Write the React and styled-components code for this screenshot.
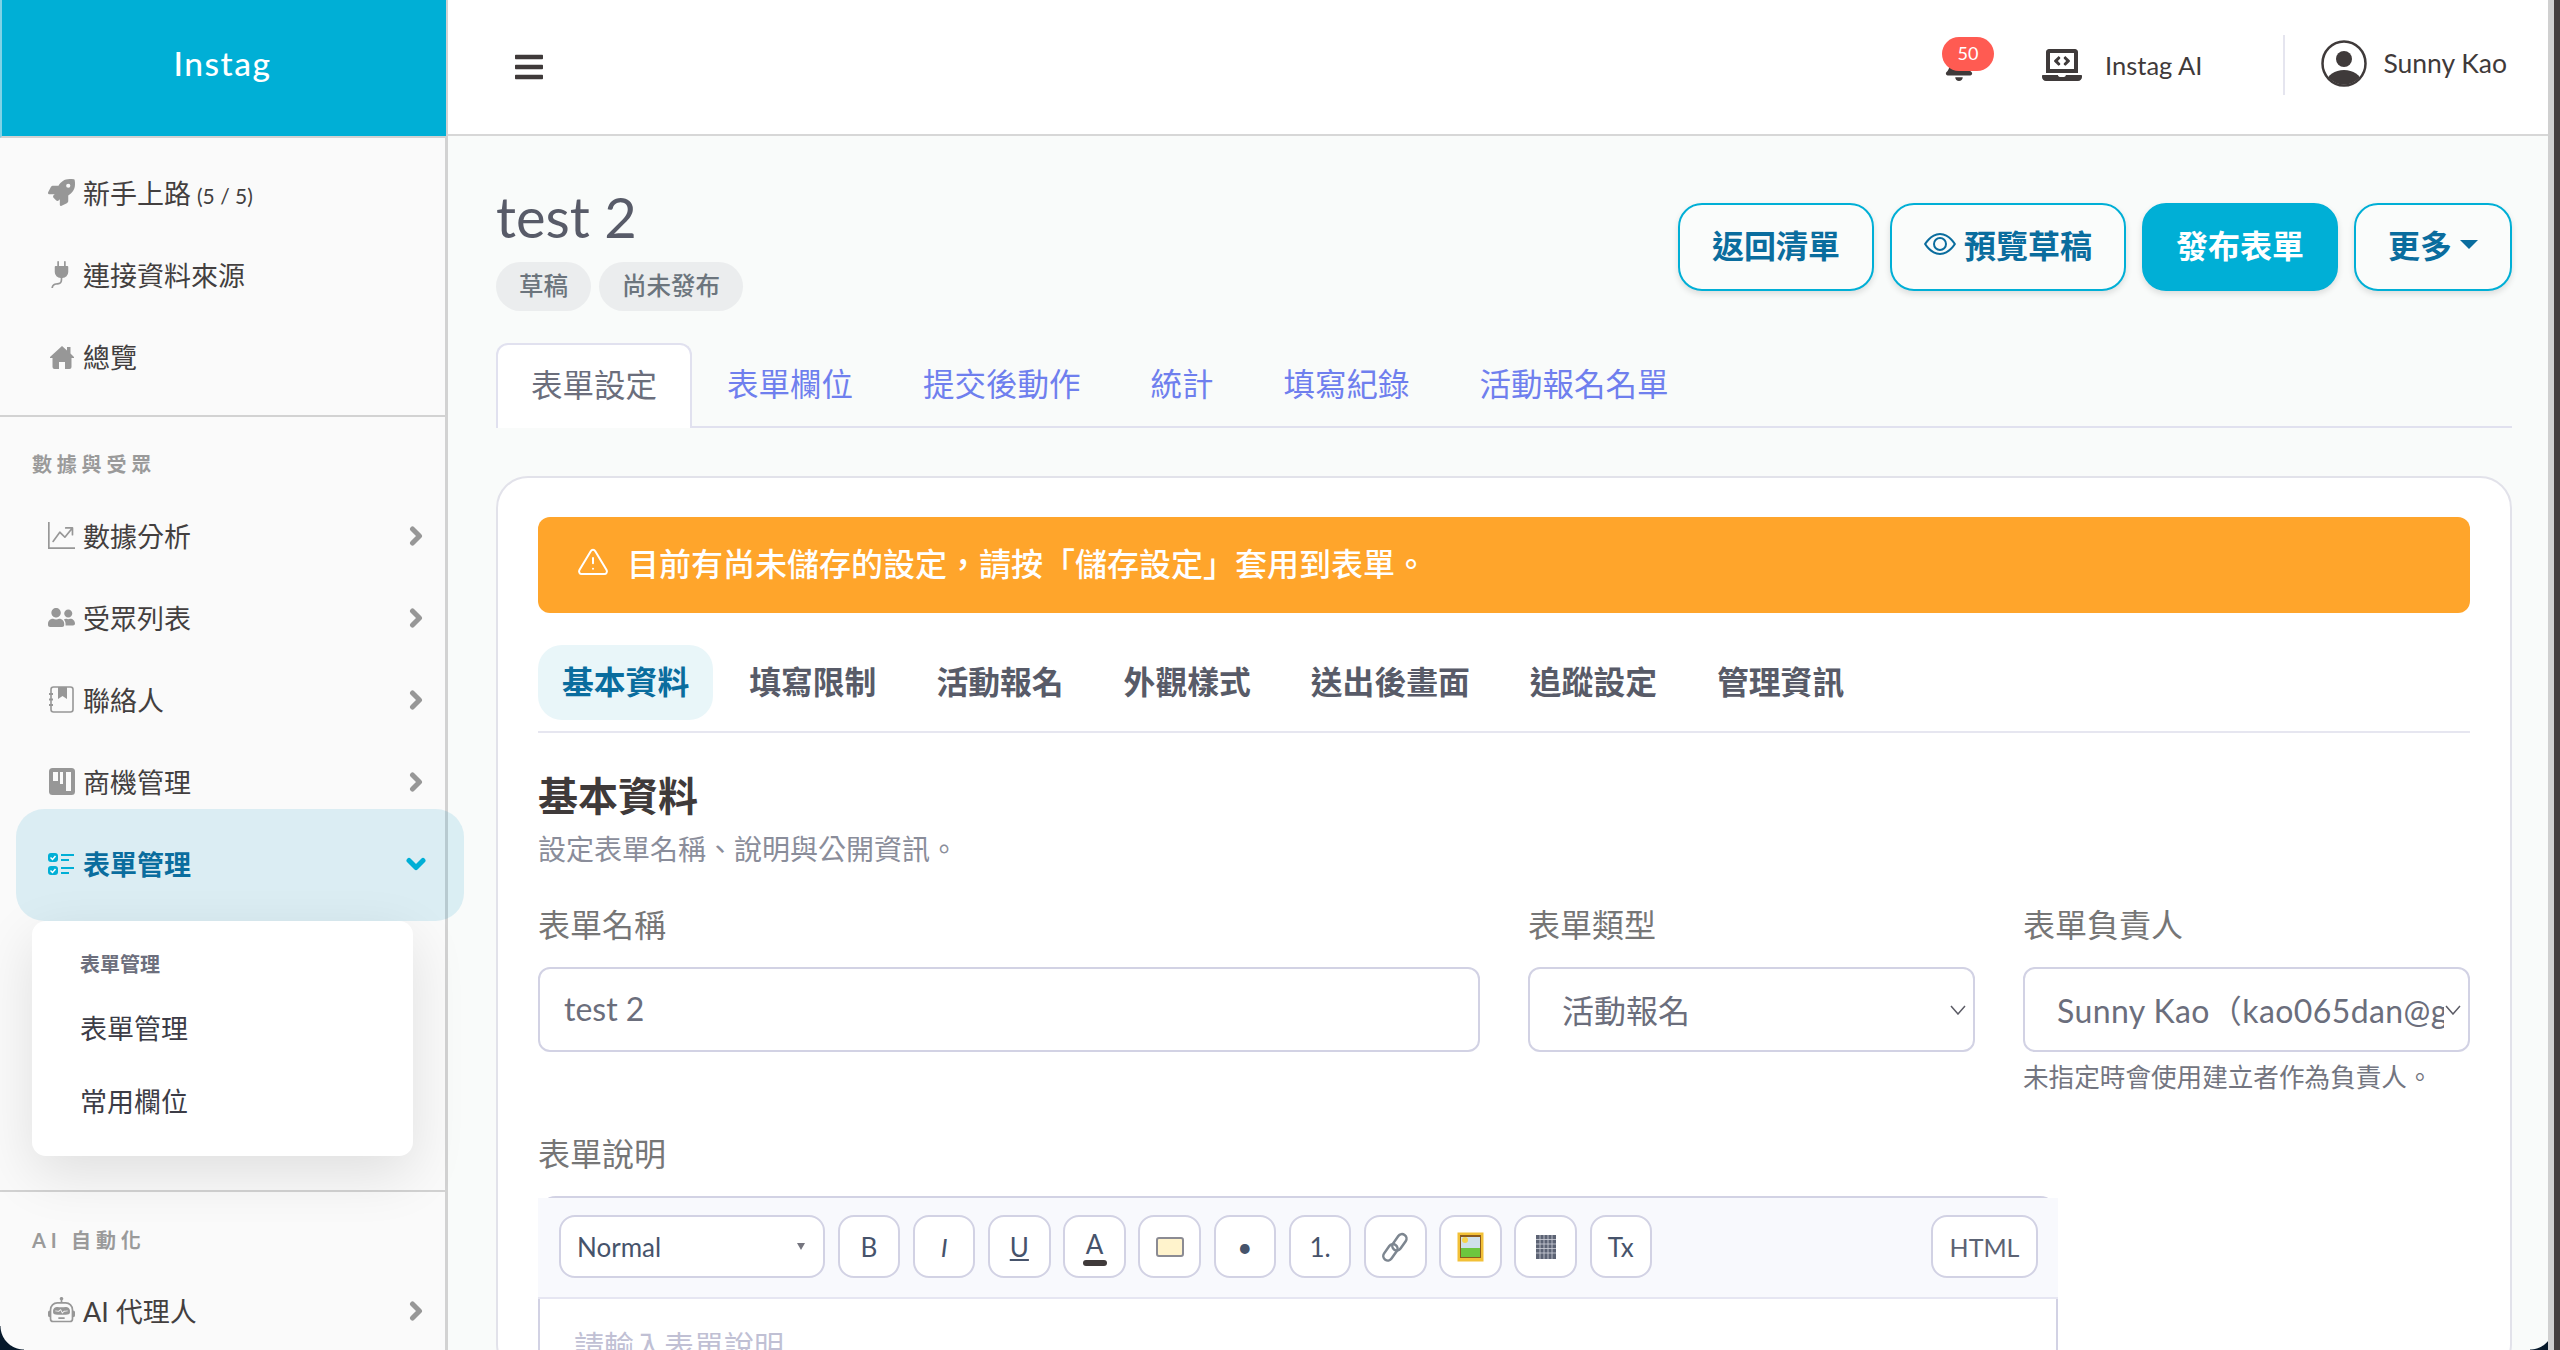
import React from "react";
import styled, { createGlobalStyle } from "styled-components";
import { FaRocket, FaUserFriends, FaBell, FaBars, FaLaptopCode } from "react-icons/fa";
import { BsPlugFill, BsGraphUpArrow, BsRobot, BsEye } from "react-icons/bs";
import { FiAlertTriangle } from "react-icons/fi";

const sans = `Lato, "Noto Sans CJK TC", "Noto Sans", sans-serif`;

const GlobalStyle = createGlobalStyle`
  html, body { margin: 0; padding: 0; height: 100%; overflow: hidden; }
  body { font-family: ${sans}; background: #443f3f; }
  * { box-sizing: border-box; }
`;

const Page = styled.div`
  display: flex;
  width: 2554px;
  height: 1350px;
  overflow: hidden;
  position: relative;
  border-right: 6px solid #d0d0d0;
`;

const Sidebar = styled.aside`
  flex: 0 0 448px;
  background: #fafafa;
  border-right: 3px solid #d2d2d2;
  display: flex;
  flex-direction: column;
  position: relative;
  z-index: 2;
  & > * {
    flex: none;
  }
`;

const Brand = styled.div`
  height: 138px;
  margin-right: -1px;
  background: #00afd6;
  border-bottom: 2px solid #d2d2d2;
  border-left: 2px solid #7fd2e6;
  color: #fff;
  font-size: 33.5px;
  font-weight: 500;
  letter-spacing: 1.5px;
  display: flex;
  align-items: center;
  justify-content: center;
  padding: 0 3px 10px 0;
`;

const NavGroup = styled.div`
  padding-top: 15px;
  height: ${(p) => p.$height}px;
  border-bottom: ${(p) => (p.$divider ? "2px solid #d2d2d2" : "0")};
`;

const Item = styled.div`
  height: ${(p) => (p.$active ? 112 : 82)}px;
  display: flex;
  align-items: center;
  gap: 8px;
  padding: 0 22px 3px 48px;
  color: ${(p) => (p.$active ? "#0a6d9e" : "#433f3f")};
  font-size: 27px;
  font-weight: ${(p) => (p.$active ? 700 : 400)};
  ${(p) =>
    p.$active &&
    `
    margin: -15px -19px 0 16px;
    padding: 0 38px 3px 32px;
    border-radius: 28px;
    background: rgba(0, 150, 200, 0.12);
    position: relative;
  `}
`;

const IconSlot = styled.span`
  width: 27px;
  height: 27px;
  flex: none;
  display: flex;
  align-items: center;
  justify-content: center;
  color: ${(p) => (p.$active ? "#00afd6" : "#979797")};
  font-size: 27px;
`;

const ItemLabel = styled.span`
  flex: 1;
  white-space: nowrap;
`;

const Count = styled.small`
  font-size: 21px;
  font-weight: 400;
  margin-left: 6px;
`;

const ChevronSvg = styled.svg`
  display: block;
  flex: none;
`;

const SectionTitle = styled.div`
  color: #9a9a9a;
  font-size: 20px;
  font-weight: 700;
  letter-spacing: 4.8px;
  padding: 0 0 2px 32px;
  height: 57px;
  display: flex;
  align-items: center;
  margin-top: ${(p) => p.$top || 0}px;
  margin-bottom: ${(p) => p.$bottom || 0}px;
`;

const SubMenu = styled.div`
  margin: 0 32px;
  height: 235px;
  background: #fff;
  border-radius: 14px;
  box-shadow: 0 18px 56px rgba(0, 0, 0, 0.11);
  padding-top: 26px;
  position: relative;
`;

const SubTitle = styled.div`
  color: #6d6f7d;
  font-size: 20px;
  font-weight: 700;
  padding-left: 48px;
  height: 32px;
  margin-bottom: 12px;
  display: flex;
  align-items: center;
`;

const SubLink = styled.div`
  color: #3c3c46;
  font-size: 27px;
  padding-left: 48px;
  height: 73px;
  display: flex;
  align-items: center;
`;

const Corner = styled.div`
  position: absolute;
  bottom: 0;
  width: 24px;
  height: 24px;
  z-index: 5;
  ${(p) =>
    p.$right
      ? `right: -6px; background: radial-gradient(circle at 0 0, transparent 23px, #07192b 24px);`
      : `left: 0; background: radial-gradient(circle at 100% 0, transparent 23px, #07192b 24px);`}
`;

const Main = styled.main`
  flex: 0 0 2100px;
  background: linear-gradient(#f1f2f2, #f9fbfa 60px);
  display: flex;
  flex-direction: column;
`;

const Header = styled.header`
  height: 136px;
  flex: none;
  background: #fff;
  border-bottom: 2px solid #d7d7d7;
  display: flex;
  align-items: center;
  padding-left: 65px;
  color: #3f3a3a;
`;

const Burger = styled.span`
  display: flex;
  font-size: 32px;
  color: #3f3a3a;
  flex: 1;
`;

const BellBox = styled.div`
  position: relative;
  width: 52px;
  height: 44px;
  margin-bottom: 16px;
  color: #3f3a3a;
  font-size: 30px;
  display: flex;
  align-items: flex-end;
  padding-left: 2px;
`;

const Badge = styled.span`
  position: absolute;
  left: 0;
  top: 0;
  width: 52px;
  height: 34px;
  border-radius: 17px;
  background: #ff5b52;
  color: #fff;
  font-size: 18px;
  display: flex;
  align-items: center;
  justify-content: center;
  padding-bottom: 3px;
`;

const TopLink = styled.div`
  display: flex;
  align-items: center;
  gap: 23px;
  font-size: 25.5px;
  margin-left: 48px;
  color: #3f3a3a;
  margin-bottom: 4px;
`;

const LaptopIcon = styled.span`
  display: flex;
  font-size: 40px;
`;

const Rule = styled.span`
  width: 2px;
  height: 60px;
  background: #e5e5ef;
  margin: 0 36px 4px 81px;
`;

const UserBox = styled.div`
  display: flex;
  align-items: center;
  gap: 16px;
  font-size: 26.5px;
  margin-bottom: 8px;
  margin-right: 41px;
  white-space: nowrap;
`;

const Content = styled.div`
  padding: 67px 36px 0 48px;
  flex: 1;
`;

const TitleRow = styled.div`
  display: flex;
  justify-content: space-between;
  height: 140px;
`;

const Title = styled.h1`
  margin: -15px 0 0;
  font-size: 56px;
  font-weight: 400;
  line-height: 58px;
  color: #585b68;
`;

const Tags = styled.div`
  display: flex;
  gap: 8px;
  margin-top: 16px;
`;

const Tag = styled.span`
  height: 49px;
  padding: 0 23px 4px;
  border-radius: 25px;
  background: #ebedee;
  color: #6c757d;
  font-size: 24.5px;
  font-weight: 500;
  display: flex;
  align-items: center;
`;

const Actions = styled.div`
  display: flex;
  gap: 16px;
`;

const ActionButton = styled.button`
  height: 88px;
  padding: 0 32px 6px;
  border-radius: 24px;
  border: 2px solid #00afd6;
  background: ${(p) => (p.$primary ? "#00afd6" : "#fafcfb")};
  color: ${(p) => (p.$primary ? "#fff" : "#0a6d9e")};
  font-family: inherit;
  font-size: 32px;
  font-weight: 700;
  display: flex;
  align-items: center;
  gap: 8px;
  box-shadow: 0 3px 6px rgba(0, 0, 0, 0.12);
`;

const Caret = styled.span`
  width: 0;
  height: 0;
  border-left: 9px solid transparent;
  border-right: 9px solid transparent;
  border-top: 9px solid #0a6d9e;
`;

const Tabs = styled.div`
  display: flex;
  height: 85px;
  border-bottom: 2px solid #e1e1ef;
`;

const Tab = styled.div`
  height: 85px;
  padding: 0 35px 7px;
  font-size: 31.5px;
  display: flex;
  align-items: center;
  color: ${(p) => (p.$active ? "#6b6e7c" : "#6f7fee")};
  border-radius: 12px 12px 0 0;
  ${(p) =>
    p.$active &&
    `
    padding: 0 33px 7px;
    background: #fff;
    border: 2px solid #e1e1ef;
    border-bottom: 0;
  `}
`;

const Card = styled.section`
  margin-top: 48px;
  background: #fff;
  border: 2px solid #e2e2ea;
  border-radius: 32px;
  padding: 39px 40px 0;
  height: 900px;
`;

const Alert = styled.div`
  height: 96px;
  background: #ffa52b;
  border-radius: 12px;
  color: #fff;
  font-size: 32px;
  font-weight: 500;
  display: flex;
  align-items: center;
  gap: 18px;
  padding: 0 0 6px 39px;
`;

const SubTabs = styled.div`
  display: flex;
  gap: 12px;
  margin-top: 32px;
  padding-bottom: 11px;
  border-bottom: 2px solid #e6e6f0;
`;

const SubTab = styled.div`
  height: 75px;
  padding: 0 24px 5px;
  border-radius: 24px;
  font-size: 31.8px;
  font-weight: 700;
  display: flex;
  align-items: center;
  color: ${(p) => (p.$active ? "#0a6d9e" : "#585b68")};
  background: ${(p) => (p.$active ? "#e9f6f9" : "transparent")};
`;

const Heading = styled.h2`
  margin: 39px 0 0;
  font-size: 40px;
  line-height: 48px;
  font-weight: 700;
  color: #3f3a3a;
`;

const Sub = styled.p`
  margin: 11px 0 0;
  font-size: 28px;
  line-height: 36px;
  color: #8a8d9a;
`;

const FieldGrid = styled.div`
  display: grid;
  grid-template-columns: 942px 447px 447px;
  column-gap: 48px;
  margin-top: 34px;
`;

const Field = styled.div`
  display: flex;
  flex-direction: column;
`;

const Label = styled.label`
  font-size: 32px;
  line-height: 48px;
  color: #767676;
  margin-bottom: 18px;
`;

const DescLabel = styled(Label)`
  display: block;
  margin-top: 35px;
`;

const Input = styled.div`
  height: 85px;
  border: 2px solid #d2d2e4;
  border-radius: 12px;
  background: #fff;
  color: #6b6e7c;
  font-size: 32px;
  display: flex;
  align-items: center;
  padding-left: ${(p) => p.$pad || 24}px;
  padding-right: ${(p) => (p.$select ? 24 : 0)}px;
  padding-bottom: 2px;
  position: relative;
  overflow: hidden;
  white-space: nowrap;
`;

const SelectArrow = styled.svg`
  position: absolute;
  right: 7px;
  top: 36px;
  width: 16px;
  height: 10px;
`;

const ClipText = styled.span`
  overflow: hidden;
  letter-spacing: 0.4px;
`;

const Hint = styled.small`
  font-size: 25.6px;
  line-height: 36px;
  color: #737580;
  margin-top: 7px;
`;

const Editor = styled.div`
  width: 1520px;
  border: 2px solid #d2d2e4;
  border-radius: 18px;
`;

const Toolbar = styled.div`
  height: 101px;
  margin: 0 -2px;
  padding: 17px 20px 0 21px;
  background: #f8f9fd;
  border-bottom: 2px solid #e6e6f2;
  display: flex;
  gap: 12.7px;
`;

const FormatSelect = styled.div`
  width: 266px;
  height: 63px;
  border: 2px solid #d2d2e4;
  border-radius: 16px;
  background: #fff;
  color: #46536b;
  font-size: 26px;
  display: flex;
  align-items: center;
  justify-content: space-between;
  padding: 0 18px 0 16px;
`;

const TinyCaret = styled.span`
  width: 0;
  height: 0;
  border-left: 4px solid transparent;
  border-right: 4px solid transparent;
  border-top: 7px solid #75757f;
`;

const ToolButton = styled.div`
  width: 62.5px;
  height: 63px;
  flex: none;
  border: 2px solid #d2d2e4;
  border-radius: 16px;
  background: #fff;
  color: #46536b;
  font-size: 26px;
  display: flex;
  flex-direction: column;
  align-items: center;
  justify-content: center;
  position: relative;
  font-style: ${(p) => (p.$italic ? "italic" : "normal")};
  text-decoration: ${(p) => (p.$underline ? "underline" : "none")};
`;

const ColorBar = styled.span`
  width: 24px;
  height: 6px;
  border-radius: 3px;
  background: #3f3a3a;
`;

const Swatch = styled.span`
  width: 28px;
  height: 20px;
  border-radius: 3px;
  background: #fff3cc;
  border: 2px solid #8b8b93;
`;

const HtmlButton = styled(ToolButton)`
  width: 107px;
  margin-left: auto;
  font-size: 25px;
  color: #5c6374;
`;

const Placeholder = styled.div`
  padding: 24px 34px;
  color: #c0c0d4;
  font-size: 30px;
  line-height: 44px;
`;

function ChevronRight() {
  return (
    <ChevronSvg width="14" height="20" viewBox="0 0 14 20" fill="none" stroke="#979797" strokeWidth="5" strokeLinecap="round" strokeLinejoin="round">
      <path d="M3.5 3l7 7-7 7" />
    </ChevronSvg>
  );
}

function ChevronDown() {
  return (
    <ChevronSvg width="20" height="14" viewBox="0 0 20 14" fill="none" stroke="#00afd6" strokeWidth="5" strokeLinecap="round" strokeLinejoin="round">
      <path d="M3 3.5l7 7 7-7" />
    </ChevronSvg>
  );
}

function HomeIcon() {
  return (
    <svg width="24" height="24" viewBox="0 0 24 24" fill="#979797">
      <path d="M12 1l5 4.4V2h3.5v6.5L24 12v1h-2.5v9a2 2 0 0 1-2 2H15v-7H9v7H4.5a2 2 0 0 1-2-2v-9H0v-1z" />
    </svg>
  );
}

function ContactsIcon() {
  return (
    <svg width="27" height="27" viewBox="0 0 27 27" fill="none">
      <rect x="3" y="1" width="22" height="25" rx="2.5" stroke="#979797" strokeWidth="1.6" />
      <path d="M10 1h9v12l-4.5-3-4.5 3z" fill="#979797" />
      <path d="M1 8h4M1 13.5h4M1 19h4" stroke="#979797" strokeWidth="1.8" />
    </svg>
  );
}

function BoardIcon() {
  return (
    <svg width="26" height="27" viewBox="0 0 26 27">
      <rect width="26" height="27" rx="3.5" fill="#979797" />
      <rect x="4" y="4" width="5" height="9" fill="#fafafa" />
      <rect x="11" y="4" width="3" height="12" fill="#fafafa" />
      <rect x="17" y="4" width="5" height="19" fill="#fafafa" />
    </svg>
  );
}

function FormIcon() {
  return (
    <svg width="27" height="24" viewBox="0 0 27 24" fill="none">
      <rect y="1" width="10" height="9" rx="3" fill="#00afd6" />
      <rect y="14" width="10" height="9" rx="3" fill="#00afd6" />
      <path d="M2.5 5.5l2 2 3-3.5M2.5 18.5l2 2 3-3.5" stroke="#fff" strokeWidth="1.5" />
      <path d="M13 3h13M13 8h8M13 16h13M13 21h8" stroke="#00afd6" strokeWidth="2" />
    </svg>
  );
}

function AvatarIcon() {
  return (
    <svg width="46" height="47" viewBox="0 0 46 47" fill="none">
      <defs>
        <clipPath id="avatar-clip">
          <circle cx="23" cy="23.5" r="21" />
        </clipPath>
      </defs>
      <ellipse cx="23" cy="23.5" rx="21.5" ry="22" stroke="#3f3a3a" strokeWidth="2.5" />
      <circle cx="23" cy="19" r="8" fill="#3f3a3a" />
      <ellipse cx="23" cy="42" rx="17" ry="12" fill="#3f3a3a" clipPath="url(#avatar-clip)" />
    </svg>
  );
}

function ImageIcon() {
  return (
    <svg width="27" height="30" viewBox="0 0 27 30">
      <rect x="0.5" y="0.5" width="26" height="29" fill="#f2c037" />
      <rect x="3" y="3" width="21" height="23" fill="#8a5a1c" />
      <rect x="4" y="5" width="19" height="12" fill="#cfe0ea" />
      <circle cx="8" cy="8" r="3" fill="#f6d24a" />
      <rect x="4" y="16" width="19" height="9" fill="#6cc63e" />
    </svg>
  );
}

function LinkIcon() {
  return (
    <svg width="28" height="30" viewBox="0 0 28 30" fill="none" stroke="#7d8690" strokeWidth="2.5">
      <rect x="14" y="1" width="9" height="18" rx="4.5" transform="rotate(35 18 10)" />
      <rect x="5" y="11" width="9" height="18" rx="4.5" transform="rotate(35 9 20)" />
    </svg>
  );
}

function TableIcon() {
  return (
    <svg width="20" height="24" viewBox="0 0 20 24">
      <rect width="20" height="24" fill="#5c6374" />
      <path d="M0 4.5H20M0 9H20M0 13.5H20M0 18H20M4 0V24M8 0V24M12 0V24M16 0V24" stroke="#cfd2da" strokeWidth="0.8" />
    </svg>
  );
}

function Row({ icon, children, chevron, active }) {
  return (
    <Item $active={active}>
      <IconSlot $active={active}>{icon}</IconSlot>
      <ItemLabel>{children}</ItemLabel>
      {chevron && (active ? <ChevronDown /> : <ChevronRight />)}
    </Item>
  );
}

function Arrow() {
  return (
    <SelectArrow viewBox="0 0 16 10">
      <path d="M1 1l7 8 7-8" fill="none" stroke="#5c5c66" strokeWidth="1.5" />
    </SelectArrow>
  );
}

export default function App() {
  return (
    <>
      <GlobalStyle />
      <Page>
        <Sidebar>
          <Brand>Instag</Brand>
          <NavGroup $height={279} $divider>
            <Item>
              <IconSlot><FaRocket /></IconSlot>
              <ItemLabel>新手上路<Count>(5 / 5)</Count></ItemLabel>
            </Item>
            <Row icon={<BsPlugFill />}>連接資料來源</Row>
            <Row icon={<HomeIcon />}>總覽</Row>
          </NavGroup>
          <SectionTitle $top={19} $bottom={3}>數據與受眾</SectionTitle>
          <Row icon={<BsGraphUpArrow />} chevron>數據分析</Row>
          <Row icon={<FaUserFriends />} chevron>受眾列表</Row>
          <Row icon={<ContactsIcon />} chevron>聯絡人</Row>
          <Row icon={<BoardIcon />} chevron>商機管理</Row>
          <Row icon={<FormIcon />} chevron active>表單管理</Row>
          <SubMenu>
            <SubTitle>表單管理</SubTitle>
            <SubLink>表單管理</SubLink>
            <SubLink>常用欄位</SubLink>
          </SubMenu>
          <NavGroup $height={36} $divider />
          <SectionTitle $top={20} $bottom={2}>AI 自動化</SectionTitle>
          <Row icon={<BsRobot />} chevron>AI 代理人</Row>
          <Corner />
        </Sidebar>
        <Main>
          <Header>
            <Burger><FaBars /></Burger>
            <BellBox>
              <FaBell />
              <Badge>50</Badge>
            </BellBox>
            <TopLink>
              <LaptopIcon><FaLaptopCode /></LaptopIcon>
              Instag AI
            </TopLink>
            <Rule />
            <UserBox>
              <AvatarIcon />
              Sunny Kao
            </UserBox>
          </Header>
          <Content>
            <TitleRow>
              <div>
                <Title>test 2</Title>
                <Tags>
                  <Tag>草稿</Tag>
                  <Tag>尚未發布</Tag>
                </Tags>
              </div>
              <Actions>
                <ActionButton>返回清單</ActionButton>
                <ActionButton><BsEye />預覽草稿</ActionButton>
                <ActionButton $primary>發布表單</ActionButton>
                <ActionButton>更多<Caret /></ActionButton>
              </Actions>
            </TitleRow>
            <Tabs>
              <Tab $active>表單設定</Tab>
              <Tab>表單欄位</Tab>
              <Tab>提交後動作</Tab>
              <Tab>統計</Tab>
              <Tab>填寫紀錄</Tab>
              <Tab>活動報名名單</Tab>
            </Tabs>
            <Card>
              <Alert><FiAlertTriangle size={32} strokeWidth={1.5} />目前有尚未儲存的設定，請按「儲存設定」套用到表單。</Alert>
              <SubTabs>
                <SubTab $active>基本資料</SubTab>
                <SubTab>填寫限制</SubTab>
                <SubTab>活動報名</SubTab>
                <SubTab>外觀樣式</SubTab>
                <SubTab>送出後畫面</SubTab>
                <SubTab>追蹤設定</SubTab>
                <SubTab>管理資訊</SubTab>
              </SubTabs>
              <Heading>基本資料</Heading>
              <Sub>設定表單名稱、說明與公開資訊。</Sub>
              <FieldGrid>
                <Field>
                  <Label>表單名稱</Label>
                  <Input>test 2</Input>
                </Field>
                <Field>
                  <Label>表單類型</Label>
                  <Input $pad={32} $select>
                    活動報名
                    <Arrow />
                  </Input>
                </Field>
                <Field>
                  <Label>表單負責人</Label>
                  <Input $pad={32} $select>
                    <ClipText>Sunny Kao（kao065dan@gmail.com）</ClipText>
                    <Arrow />
                  </Input>
                  <Hint>未指定時會使用建立者作為負責人。</Hint>
                </Field>
              </FieldGrid>
              <DescLabel as="div">表單說明</DescLabel>
              <Editor>
                <Toolbar>
                  <FormatSelect>Normal<TinyCaret /></FormatSelect>
                  <ToolButton>B</ToolButton>
                  <ToolButton $italic>I</ToolButton>
                  <ToolButton $underline>U</ToolButton>
                  <ToolButton>A<ColorBar /></ToolButton>
                  <ToolButton><Swatch /></ToolButton>
                  <ToolButton>•</ToolButton>
                  <ToolButton>1.</ToolButton>
                  <ToolButton><LinkIcon /></ToolButton>
                  <ToolButton><ImageIcon /></ToolButton>
                  <ToolButton><TableIcon /></ToolButton>
                  <ToolButton>Tx</ToolButton>
                  <HtmlButton>HTML</HtmlButton>
                </Toolbar>
                <Placeholder>請輸入表單說明</Placeholder>
              </Editor>
            </Card>
          </Content>
        </Main>
        <Corner $right />
      </Page>
    </>
  );
}
